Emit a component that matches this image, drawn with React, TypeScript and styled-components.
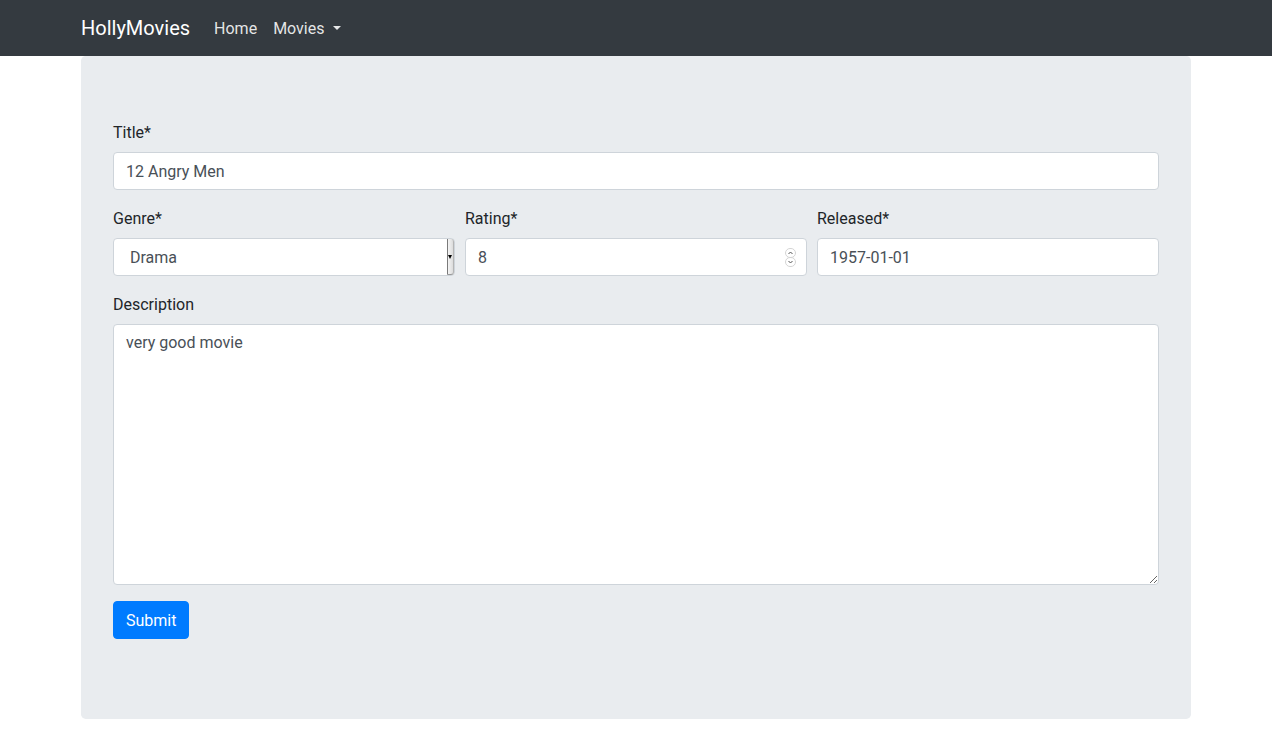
import styled, { createGlobalStyle } from "styled-components";

const GlobalStyle = createGlobalStyle`
  * { box-sizing: border-box; }
  body {
    margin: 0;
    font-family: Roboto, "Liberation Sans", Arial, sans-serif;
    font-size: 16px;
    line-height: 1.5;
    color: #212529;
    background: #fff;
  }
`;

const Navbar = styled.nav`
  background: #343a40;
  height: 56px;
  padding: 8px 0;
`;

const Container = styled.div`
  width: 1140px;
  margin: 0 auto;
  padding: 0 15px;
`;

const NavInner = styled(Container)`
  display: flex;
  align-items: center;
  height: 40px;
`;

const Brand = styled.a`
  color: #fff;
  font-size: 20px;
  line-height: 30px;
  padding: 5px 0;
  margin-right: 16px;
  text-decoration: none;
`;

const NavLink = styled.a<{ $caret?: boolean }>`
  color: rgba(255, 255, 255, 0.88);
  padding: 9px 8px 7px;
  text-decoration: none;
  line-height: 24px;
  &::after {
    content: ${(p) => (p.$caret ? '""' : "none")};
    display: inline-block;
    margin-left: 9px;
    vertical-align: 4px;
    border-top: 4.5px solid;
    border-right: 4px solid transparent;
    border-left: 4px solid transparent;
    border-bottom: 0;
  }
`;

const Jumbotron = styled.div`
  background: #e9ecef;
  border-radius: 4.8px;
  padding: 64px 32px;
`;

const FormGroup = styled.div`
  margin-bottom: 16px;
`;

const FormRow = styled.div`
  display: grid;
  grid-template-columns: repeat(3, 1fr);
  column-gap: 10px;
`;

const Label = styled.label`
  display: inline-block;
  padding-top: 1px;
  margin-bottom: 7px;
`;

const fieldCss = `
  display: block;
  width: 100%;
  padding: 6px 12px;
  font-family: Roboto, "Liberation Sans", Arial, sans-serif;
  font-size: 16px;
  line-height: 24px;
  color: #495057;
  background: #fff;
  border: 1px solid #ced4da;
  border-radius: 4px;
  outline: none;
`;

const Input = styled.input`
  ${fieldCss}
  height: 38px;
  &::-webkit-inner-spin-button,
  &::-webkit-outer-spin-button {
    -webkit-appearance: none;
    margin: 0;
  }
`;

const FieldWrap = styled.div`
  position: relative;
`;

const Select = styled.select`
  ${fieldCss}
  height: 38px;
  padding: 7px 12px 5px 16px;
  appearance: none;
  -webkit-appearance: none;
`;

/* native-looking dropdown strip sitting over the select's right edge */
const SelectStrip = styled.span`
  position: absolute;
  top: 1px;
  right: 1px;
  bottom: 1px;
  width: 7px;
  border-left: 1px solid #7a7a7a;
  border-right: 1px solid #b5b5b5;
  border-bottom: 1px solid #9a9a9a;
  border-radius: 0 3px 3px 0;
  background: linear-gradient(to right, #f4f4f4, #dcdcdc);
  pointer-events: none;
  &::after {
    content: "";
    position: absolute;
    left: 0;
    top: 16px;
    border-top: 4px solid #000;
    border-left: 2.5px solid transparent;
    border-right: 2.5px solid transparent;
  }
`;

const Spinner = styled.svg`
  position: absolute;
  right: 11px;
  top: 10px;
  width: 11px;
  height: 19px;
  pointer-events: none;
`;

const TextArea = styled.textarea`
  ${fieldCss}
  height: 261px;
`;

const Button = styled.button`
  font-family: Roboto, "Liberation Sans", Arial, sans-serif;
  font-size: 16px;
  line-height: 24px;
  padding: 7px 12px 5px;
  color: #fff;
  background: #007bff;
  border: 1px solid #007bff;
  border-radius: 4px;
  cursor: pointer;
`;

export default function App() {
  return (
    <>
      <GlobalStyle />
      <Navbar>
        <NavInner>
          <Brand href="#">HollyMovies</Brand>
          <NavLink href="#">Home</NavLink>
          <NavLink href="#" $caret>
            Movies
          </NavLink>
        </NavInner>
      </Navbar>
      <Container>
        <Jumbotron>
          <form onSubmit={(e) => e.preventDefault()}>
            <FormGroup>
              <Label>Title*</Label>
              <Input type="text" defaultValue="12 Angry Men" />
            </FormGroup>
            <FormRow>
              <FormGroup>
                <Label>Genre*</Label>
                <FieldWrap>
                  <Select defaultValue="Drama">
                    <option>Action</option>
                    <option>Comedy</option>
                    <option>Drama</option>
                  </Select>
                  <SelectStrip />
                </FieldWrap>
              </FormGroup>
              <FormGroup>
                <Label>Rating*</Label>
                <FieldWrap>
                  <Input type="number" defaultValue={8} />
                  <Spinner viewBox="0 0 11 19">
                    <rect x="0.5" y="0.5" width="10" height="9" rx="4.5" fill="#fff" stroke="#d4d4d4" />
                    <rect x="0.5" y="9.5" width="10" height="9" rx="4.5" fill="#fff" stroke="#d4d4d4" />
                    <path d="M3.5 6 L5.5 4 L7.5 6" fill="none" stroke="#555" strokeWidth="1" />
                    <path d="M3.5 13 L5.5 15 L7.5 13" fill="none" stroke="#555" strokeWidth="1" />
                  </Spinner>
                </FieldWrap>
              </FormGroup>
              <FormGroup>
                <Label>Released*</Label>
                <Input type="text" defaultValue="1957-01-01" />
              </FormGroup>
            </FormRow>
            <FormGroup>
              <Label>Description</Label>
              <TextArea defaultValue="very good movie" />
            </FormGroup>
            <FormGroup>
              <Button type="submit">Submit</Button>
            </FormGroup>
          </form>
        </Jumbotron>
      </Container>
    </>
  );
}
